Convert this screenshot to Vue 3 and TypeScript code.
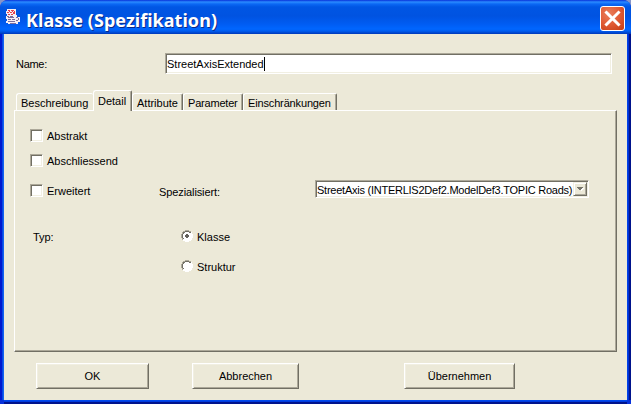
<script setup lang="ts">
import { ref } from 'vue'

const name = ref('StreetAxisExtended')
const tabs = [
  { label: 'Beschreibung', cls: 'tab-desc' },
  { label: 'Detail', cls: 'tab-detail' },
  { label: 'Attribute', cls: 'tab-attr' },
  { label: 'Parameter', cls: 'tab-param' },
  { label: 'Einschränkungen', cls: 'tab-limits' },
]
const active = ref('Detail')
const kind = ref('Klasse')
const kinds = ['Klasse', 'Struktur']
</script>

<template>
  <div class="window">
    <header class="titlebar">
      <svg class="java" width="16" height="18" viewBox="0 0 16 18" shape-rendering="crispEdges">
        <path d="M2 1h9v6h1v2h3v5h-2v2H3v-1H1v-2h1v-2H1V8h1V6H1V3h1z" fill="#f6eef4" />
        <path d="M3 2h2v1H3zM6 2h3v1H6zM2 4h2v1H2zM5 4h2v1H5zM8 4h2v2H8zM3 6h2v1H3zM6 6h2v1H6zM4 3h1v1H4zM7 3h1v1H7zM9 3h1v1H9z" fill="#e4404c" />
        <path d="M2 8h2v1H2zM5 8h3v1H5zM3 9h6v1H3zM11 9h2v1h-2zM13 10h1v2h-1zM3 11h3v1H3zM7 11h3v1H7zM3 13h7v1H3zM11 12h2v1h-2zM5 15h6v1H5z" fill="#7a6c9c" />
      </svg>
      <h1 class="title">Klasse (Spezifikation)</h1>
      <button class="close" aria-label="Schliessen">
        <svg width="25" height="25" viewBox="0 0 25 25">
          <path d="M6.5 6.5l12 12M18.5 6.5l-12 12" stroke="#fff" stroke-width="3" stroke-linecap="square" />
        </svg>
      </button>
    </header>

    <main class="body">
      <div class="name-row">
        <label class="name-label">Name:</label>
        <div class="field"><span>{{ name }}</span><i class="caret"></i></div>
      </div>

      <nav class="tabs">
        <div
          v-for="t in tabs"
          :key="t.label"
          class="tab"
          :class="[t.cls, { active: active === t.label }]"
          @click="active = t.label"
        ><span>{{ t.label }}</span></div>
      </nav>

      <section class="panel">
        <div class="check-row first"><i class="check"></i><span>Abstrakt</span></div>
        <div class="check-row second"><i class="check"></i><span>Abschliessend</span></div>
        <div class="check-row third">
          <i class="check"></i><span class="ext">Erweitert</span>
          <span class="spec">Spezialisiert:</span>
          <div class="select">
            <span class="value">StreetAxis (INTERLIS2Def2.ModelDef3.TOPIC Roads)</span>
            <div class="drop">
              <svg width="7" height="4" viewBox="0 0 7 4" shape-rendering="crispEdges">
                <path d="M2 1h5v1H6v1H5v1H4V3H3V2H2z" fill="#fff" />
                <path d="M0 0h6v1H5v1H4v1H2V2H1V1H0z" fill="#77756a" />
              </svg>
            </div>
          </div>
        </div>
        <div class="type-row">
          <span class="type-label">Typ:</span>
          <div class="radios">
            <div v-for="k in kinds" :key="k" class="radio-row" @click="kind = k">
              <svg width="12" height="12" viewBox="0 0 12 12" shape-rendering="crispEdges">
                <path d="M4 1h4v1h2v2h1v4h-1v2H8v1H4v-1H2V8H1V4h1V2h2z" fill="#fff" />
                <path d="M4 0h4v1H4zM2 1h2v1H2zM8 1h2v1H8zM1 2h1v2H1zM0 4h1v4H0zM1 8h1v2H1z" fill="#aca899" />
                <path d="M4 1h4v1H4zM2 2h2v1H2zM8 2h2v1H8zM2 3h1v1H2zM1 4h1v4H1zM2 8h1v1H2z" fill="#716f64" />
                <path d="M10 2h1v2h-1zM11 4h1v4h-1zM10 8h1v2h-1zM8 10h2v1H8zM4 11h4v1H4zM2 10h2v1H2z" fill="#fff" />
                <path v-if="kind === k" d="M5 4h2v1h1v2H7v1H5V7H4V5h1z" fill="#62605a" />
              </svg>
              <span>{{ k }}</span>
            </div>
          </div>
        </div>
      </section>

      <footer class="actions">
        <button class="btn ok">OK</button>
        <button class="btn cancel"><span>Abbrechen</span></button>
        <button class="btn apply"><span>Übernehmen</span></button>
      </footer>
    </main>
  </div>
</template>

<style>
body { margin: 0; overflow: hidden; background: #8795c8; }
</style>

<style scoped>
* { box-sizing: border-box; }
.window {
  width: 631px;
  height: 404px;
  display: flex;
  flex-direction: column;
  overflow: hidden;
  border-radius: 8px 8px 0 0;
  background: #0831d9;
  font: 11px/13px "Liberation Sans", Arial, sans-serif;
  color: #000;
  white-space: nowrap;
}
.titlebar {
  height: 34px;
  flex: none;
  display: flex;
  align-items: flex-start;
  padding: 0 6px 0 5px;
  background: linear-gradient(180deg, #0831d9 0, #2a8bff 2px, #0b68f4 4px, #0056e4 7px, #0053e1 16px, #005cf2 24px, #0066ff 29px, #005df0 31px, #0038b8 34px);
}
.java { margin-top: 8px; }
.title {
  margin: 8px 0 0 5px;
  font: bold 18px/24px "Noto Sans", "Open Sans", sans-serif;
  letter-spacing: 0.03px;
  color: #fff;
  text-shadow: 1px 1px 0 #0b2a86;
}
.close {
  width: 25px;
  height: 25px;
  margin: 6px 0 0 auto;
  padding: 0;
  border: 1px solid #fff;
  border-radius: 3px;
  background: radial-gradient(circle at 35% 30%, #ea7f5c, #e05a34 50%, #c43d14);
}
.close svg { display: block; margin: -1px; fill: none; }
.body {
  flex: 1;
  min-height: 0;
  display: flex;
  flex-direction: column;
  margin: 0 4px 4px;
  padding: 19px 9px 0 10px;
  background: #ece9d8;
  box-shadow: -1px 0 #1462f0, -2px 0 #0848e4, -4px 0 #0019cf, 1px 0 #0040e8, 2px 0 #0030d5, 4px 0 #00138c, 0 1px #0049ec, 0 2px #003bdd, 0 4px #00138c;
}
.name-row { display: flex; height: 21px; flex: none; }
.name-label { width: 151px; padding: 5px 0 0 2px; letter-spacing: -0.3px; }
.field {
  width: 447px;
  height: 21px;
  display: flex;
  padding: 2px 0 0 1px;
  background: #fff;
  border: 1px solid;
  border-color: #aca899 #fff #fff #aca899;
  box-shadow: inset 1px 1px #716f64, inset -1px -1px #f1efe2;
}
.field span { padding: 2px 0 0 0; }
.caret { width: 1px; height: 14px; margin-top: 1px; background: #000; }
.tabs { display: flex; align-items: flex-end; height: 20px; margin: 16px 0 0 2px; flex: none; }
.tab {
  height: 17px;
  padding: 3px 0 0 4px;
  border-top: 1px solid #fff;
  border-left: 1px solid #fff;
  border-right: 1px solid #716f64;
  border-radius: 3px 2px 0 0;
  box-shadow: inset -1px 0 #aca899;
}
.tab-desc { width: 77px; border-right: 0; box-shadow: none; }
.tab-detail { width: 39px; }
.tab-attr { width: 51px; }
.tab-param { width: 60px; letter-spacing: -0.2px; }
.tab-limits { width: 94px; letter-spacing: -0.15px; }
.tab.active {
  position: relative;
  height: 21px;
  margin-bottom: -1px;
  padding-top: 4px;
  background: #ece9d8;
}
.panel {
  height: 242px;
  width: 603px;
  flex: none;
  padding: 18px 0 0 15px;
  border: 1px solid;
  border-color: #fff #716f64 #716f64 #fff;
  box-shadow: inset -1px -1px #aca899;
}
.check-row { display: flex; height: 13px; line-height: 14px; }
.check-row.second { margin-top: 12px; }
.check-row.third { margin-top: 17px; }
.check-row > span { padding: 0 0 0 4px; }
.check-row .ext { width: 114px; }
.check-row .spec { width: 159px; padding: 1px 0 0 2px; letter-spacing: -0.1px; }
.check {
  width: 13px;
  height: 13px;
  flex: none;
  background: #fff;
  border: 1px solid;
  border-color: #aca899 #fff #fff #aca899;
  box-shadow: inset 1px 1px #716f64, inset -1px -1px #f1efe2;
}
.select {
  width: 274px;
  height: 18px;
  margin: -4px 0 0 -1px;
  display: flex;
  background: #fff;
  padding: 1px;
  border: 1px solid;
  border-color: #aca899 #fff #fff #aca899;
  box-shadow: inset 1px 1px #716f64, inset -1px -1px #f1efe2;
}
.value { flex: 1; min-width: 0; padding: 1px 0 0; letter-spacing: -0.245px; }
.drop {
  width: 14px;
  height: 14px;
  flex: none;
  padding: 4px 0 0 3px;
  background: #ece9d8;
  border: 1px solid;
  border-color: #f1efe2 #716f64 #716f64 #f1efe2;
  box-shadow: inset 1px 1px #fff, inset -1px -1px #aca899;
}
.drop svg { display: block; }
.type-row { display: flex; margin-top: 33px; }
.type-label { width: 151px; padding: 1px 0 0 3px; letter-spacing: -0.1px; }
.radios { display: flex; flex-direction: column; gap: 18px; }
.radio-row { display: flex; height: 12px; gap: 4px; }
.radio-row span { padding-top: 1px; }
.actions { display: flex; padding: 11px 0 0 22px; }
.btn {
  height: 26px;
  padding: 1px 0 0;
  border: 1px solid;
  border-color: #fff #716f64 #716f64 #fff;
  box-shadow: inset 1px 1px #f1efe2, inset -1px -1px #aca899;
  background: #ece9d8;
  font: inherit;
  color: inherit;
}
.ok { width: 113px; }
.cancel { width: 107px; margin-left: 43px; }
.apply { width: 111px; margin-left: 105px; }
</style>
